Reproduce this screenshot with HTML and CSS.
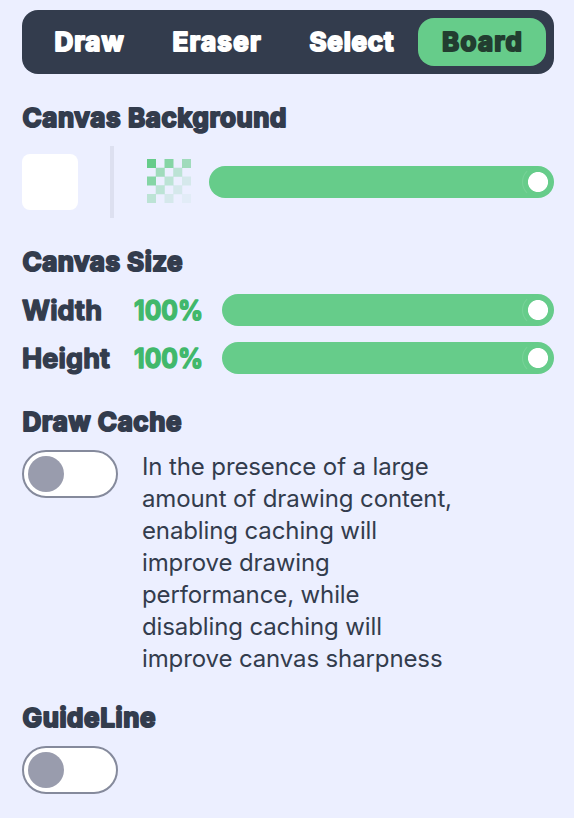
FILE: index.html
```html
<!DOCTYPE html>
<html lang="en">
<head>
<meta charset="utf-8">
<title>Board</title>
<link rel="stylesheet" href="styles.css">
</head>
<body>
<nav class="tabs">
  <span class="tab"><svg class="type"><text x=".5" y="25.3" textLength="69">Draw</text></svg></span>
  <span class="tab"><svg class="type"><text x=".5" y="25.3" textLength="88">Eraser</text></svg></span>
  <span class="tab"><svg class="type"><text x=".5" y="25.3" textLength="84">Select</text></svg></span>
  <span class="tab active"><svg class="type"><text y="25.3" textLength="80">Board</text></svg></span>
</nav>
<section class="background">
  <h2><svg class="type"><text x=".5" y="25.3" textLength="264">Canvas Background</text></svg></h2>
  <div class="background-row">
    <div class="swatch"></div>
    <div class="divider"></div>
    <svg class="alpha" viewBox="0 0 44 44" fill="#66cc8a">
      <path d="M0 0h9v9H0z"/>
      <path d="M17.5 0h9v9h-9zM0 17.5h9v9H0z" opacity=".77"/>
      <path d="M35 0h9v9h-9zM8.75 8.75h9v9h-9z" opacity=".57"/>
      <path d="M26.25 8.75h9v9h-9zM17.5 17.5h9v9h-9zM8.75 26.25h9v9h-9zM0 35h9v9H0z" opacity=".36"/>
      <path d="M35 17.5h9v9h-9zM26.25 26.25h9v9h-9zM17.5 35h9v9h-9z" opacity=".17"/>
      <path d="M35 35h9v9h-9z" opacity=".07"/>
    </svg>
    <div class="range"><i class="thumb"></i></div>
  </div>
</section>
<section class="size">
  <h2><svg class="type"><text x=".5" y="25.3" textLength="160">Canvas Size</text></svg></h2>
  <div class="size-row"><span class="label"><svg class="type"><text y="25.5" textLength="80">Width</text></svg></span><span class="value"><svg class="type"><text y="25.5" textLength="69" lengthAdjust="spacingAndGlyphs">100%</text></svg></span><div class="range"><i class="thumb"></i></div></div>
  <div class="size-row"><span class="label"><svg class="type"><text y="25.5" textLength="88">Height</text></svg></span><span class="value"><svg class="type"><text y="25.5" textLength="69" lengthAdjust="spacingAndGlyphs">100%</text></svg></span><div class="range"><i class="thumb"></i></div></div>
</section>
<section class="cache">
  <h2><svg class="type"><text x=".5" y="25.3" textLength="159">Draw Cache</text></svg></h2>
  <div class="cache-row">
    <div class="toggle"><i class="knob"></i></div>
    <p>In the presence of a large<br>amount of drawing content,<br>enabling caching will<br>improve drawing<br>performance, while<br>disabling caching will<br>improve canvas sharpness</p>
  </div>
</section>
<section class="guide">
  <h2><svg class="type"><text x=".5" y="25.3" textLength="133">GuideLine</text></svg></h2>
  <div class="toggle"><i class="knob"></i></div>
</section>
</body>
</html>
```
FILE: styles.css
```css
* { box-sizing: border-box; }
body {
  margin: 0;
  height: 818px;
  padding: 10px 20px 0 22px;
  background: #ecefff;
  color: #333c4d;
  font-family: Inter, "Liberation Sans", sans-serif;
  overflow: hidden;
}
.tabs {
  display: grid;
  grid-template-columns: 118px 137px 133px 128px;
  padding: 8px;
  height: 64px;
  border-radius: 16px;
  background: #333c4d;
}
/* Round-jointed outline softens the corners of the heavy letters */
.type {
  display: block;
  width: 100%;
  height: 32px;
  overflow: visible;
  font-size: 26px;
  font-weight: 700;
  fill: currentColor;
  stroke: currentColor;
  stroke-width: 2px;
  stroke-linejoin: round;
}
.tab {
  padding: 8px 0 8px 24px;
  border-radius: 16px;
  color: #fff;
}
.tab.active { background: #66cc8a; color: #223d30; }
h2 { margin: 0; height: 32px; }
.background { margin-top: 28px; }
.background-row { display: flex; align-items: center; margin-top: 12px; height: 72px; }
.swatch { width: 56px; height: 56px; border-radius: 8px; background: #fff; }
.divider { width: 4px; height: 72px; margin: 0 33px 0 32px; background: #dde0f0; }
.alpha { width: 44px; height: 44px; margin: 0 18px 3px 0; }
.range {
  display: flex;
  flex: 1;
  align-items: center;
  justify-content: flex-end;
  height: 32px;
  border-radius: 16px;
  background: #66cc8a;
}
.thumb {
  width: 32px;
  height: 32px;
  border: 1px solid transparent;
  border-left-color: #78d298;
  border-radius: 50%;
  background: radial-gradient(circle, #fff 9.6px, #66cc8a 10.4px) padding-box;
}
.size { margin-top: 28px; }
.size-row { display: flex; align-items: center; height: 32px; margin-top: 16px; }
.label { width: 112px; }
.value { width: 88px; color: #41b86b; }
.label .type, .value .type { font-size: 27px; stroke-width: 1.4px; }
.cache { margin-top: 32px; }
.cache-row { display: flex; gap: 24px; margin-top: 12px; }
.toggle {
  flex: none;
  width: 96px;
  height: 48px;
  padding: 4px;
  border: 2px solid #858a9c;
  border-radius: 24px;
  background: #fff;
}
.knob { display: block; width: 36px; height: 36px; border-radius: 50%; background: #999cad; }
p { margin: 1px 0 -1px; font-size: 24px; line-height: 32px; letter-spacing: -.12px; }
.guide { margin-top: 28px; }
.guide .toggle { margin-top: 12px; }
```
